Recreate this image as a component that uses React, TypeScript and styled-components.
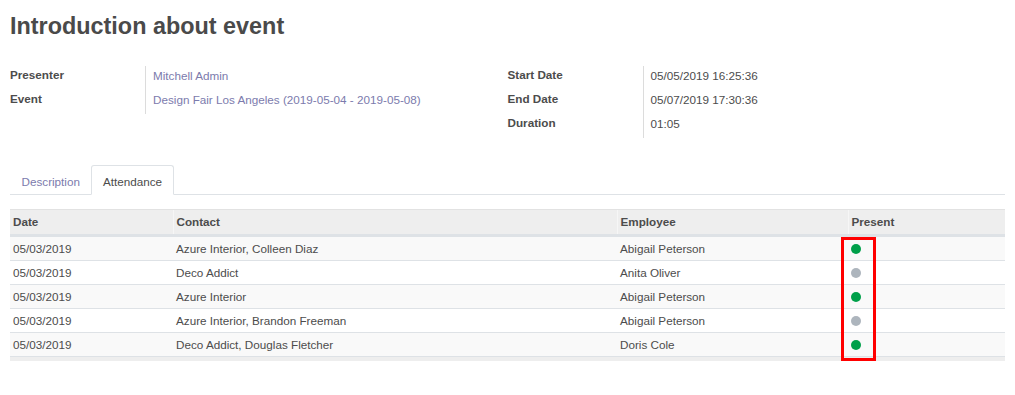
import React from "react";
import styled, { createGlobalStyle } from "styled-components";

const GlobalStyle = createGlobalStyle`
  html, body {
    margin: 0;
    padding: 0;
    background: #ffffff;
  }
  body {
    font-family: "Liberation Sans", Arial, Helvetica, sans-serif;
    font-size: 11.7px;
    color: #4c4c4c;
  }
`;

const Page = styled.div`
  padding: 12px 10px 0 10px;
  width: 995px;
`;

const Title = styled.h1`
  margin: 0;
  font-size: 23.4px;
  line-height: 28px;
  font-weight: 700;
  color: #4a4a4a;
`;

const InfoRow = styled.div`
  display: flex;
  margin-top: 26px;
`;

const Group = styled.div`
  flex: 1;
  display: grid;
  grid-template-columns: 135px 1fr;
  grid-auto-rows: 24px;
  align-content: start;
`;

const Label = styled.div`
  font-weight: 700;
  line-height: 18px;
  color: #4c4c4c;
`;

const Value = styled.div<{ $link?: boolean }>`
  border-left: 1px solid #dcdcdc;
  padding-left: 7px;
  padding-top: 1px;
  line-height: 18px;
  color: ${(p) => (p.$link ? "#7c7bad" : "#4c4c4c")};
`;

const Nav = styled.div`
  display: flex;
  margin-top: 27px;
  border-bottom: 1px solid #dee2e6;
`;

const Tab = styled.div<{ $active?: boolean }>`
  margin-bottom: -1px;
  padding: 8px 10.5px 4px;
  line-height: 16px;
  border: 1px solid transparent;
  border-top-left-radius: 3px;
  border-top-right-radius: 3px;
  color: ${(p) => (p.$active ? "#4c4c4c" : "#7c7bad")};
  background: ${(p) => (p.$active ? "#ffffff" : "transparent")};
  border-color: ${(p) =>
    p.$active ? "#dee2e6 #dee2e6 #ffffff" : "transparent"};
`;

const TableWrap = styled.div`
  position: relative;
  margin-top: 14px;
`;

const Table = styled.table`
  width: 995px;
  border-collapse: collapse;
  table-layout: fixed;
`;

const Col = styled.col<{ $w: number }>`
  width: ${(p) => p.$w}px;
`;

const Th = styled.th`
  text-align: left;
  font-weight: 700;
  height: 24px;
  line-height: 24px;
  padding: 0 3px;
  background: #eeeeee;
  color: #4c4c4c;
  border-top: 1px solid #e2e2e2;
  border-bottom: 3px solid #dee2e6;
  border-left: 1px solid #f6f6f6;
  &:first-child {
    border-left: none;
  }
`;

const Tr = styled.tr<{ $odd: boolean }>`
  background: ${(p) => (p.$odd ? "#f9f9f9" : "#ffffff")};
`;

const Td = styled.td`
  height: 23px;
  line-height: 23px;
  padding: 0 3px;
  border-bottom: 1px solid #dee2e6;
  color: #4c4c4c;
  white-space: nowrap;
`;

const FootCell = styled.td`
  height: 4px;
  padding: 0;
  background: #eeeeee;
`;

const Dot = styled.span<{ $on: boolean }>`
  display: inline-block;
  width: 10px;
  height: 10px;
  border-radius: 50%;
  vertical-align: middle;
  margin-top: -2px;
  background: ${(p) => (p.$on ? "#00a04a" : "#adb5bd")};
`;

const Highlight = styled.div`
  position: absolute;
  left: 831px;
  top: 28px;
  width: 35px;
  height: 124px;
  box-sizing: border-box;
  border: 3px solid #ff0000;
  pointer-events: none;
`;

const rows = [
  { date: "05/03/2019", contact: "Azure Interior, Colleen Diaz", employee: "Abigail Peterson", present: true },
  { date: "05/03/2019", contact: "Deco Addict", employee: "Anita Oliver", present: false },
  { date: "05/03/2019", contact: "Azure Interior", employee: "Abigail Peterson", present: true },
  { date: "05/03/2019", contact: "Azure Interior, Brandon Freeman", employee: "Abigail Peterson", present: false },
  { date: "05/03/2019", contact: "Deco Addict, Douglas Fletcher", employee: "Doris Cole", present: true },
];

export default function App() {
  return (
    <>
      <GlobalStyle />
      <Page>
        <Title>Introduction about event</Title>
        <InfoRow>
          <Group>
            <Label>Presenter</Label>
            <Value $link>Mitchell Admin</Value>
            <Label>Event</Label>
            <Value $link>Design Fair Los Angeles (2019-05-04 - 2019-05-08)</Value>
          </Group>
          <Group>
            <Label>Start Date</Label>
            <Value>05/05/2019 16:25:36</Value>
            <Label>End Date</Label>
            <Value>05/07/2019 17:30:36</Value>
            <Label>Duration</Label>
            <Value>01:05</Value>
          </Group>
        </InfoRow>
        <Nav>
          <Tab>Description</Tab>
          <Tab $active>Attendance</Tab>
        </Nav>
        <TableWrap>
          <Table>
            <colgroup>
              <Col $w={163} />
              <Col $w={444} />
              <Col $w={231} />
              <Col $w={157} />
            </colgroup>
            <thead>
              <tr>
                <Th>Date</Th>
                <Th>Contact</Th>
                <Th>Employee</Th>
                <Th>Present</Th>
              </tr>
            </thead>
            <tbody>
              {rows.map((r, i) => (
                <Tr key={i} $odd={i % 2 === 0}>
                  <Td>{r.date}</Td>
                  <Td>{r.contact}</Td>
                  <Td>{r.employee}</Td>
                  <Td>
                    <Dot $on={r.present} />
                  </Td>
                </Tr>
              ))}
            </tbody>
            <tfoot>
              <tr>
                <FootCell colSpan={4} />
              </tr>
            </tfoot>
          </Table>
          <Highlight />
        </TableWrap>
      </Page>
    </>
  );
}
